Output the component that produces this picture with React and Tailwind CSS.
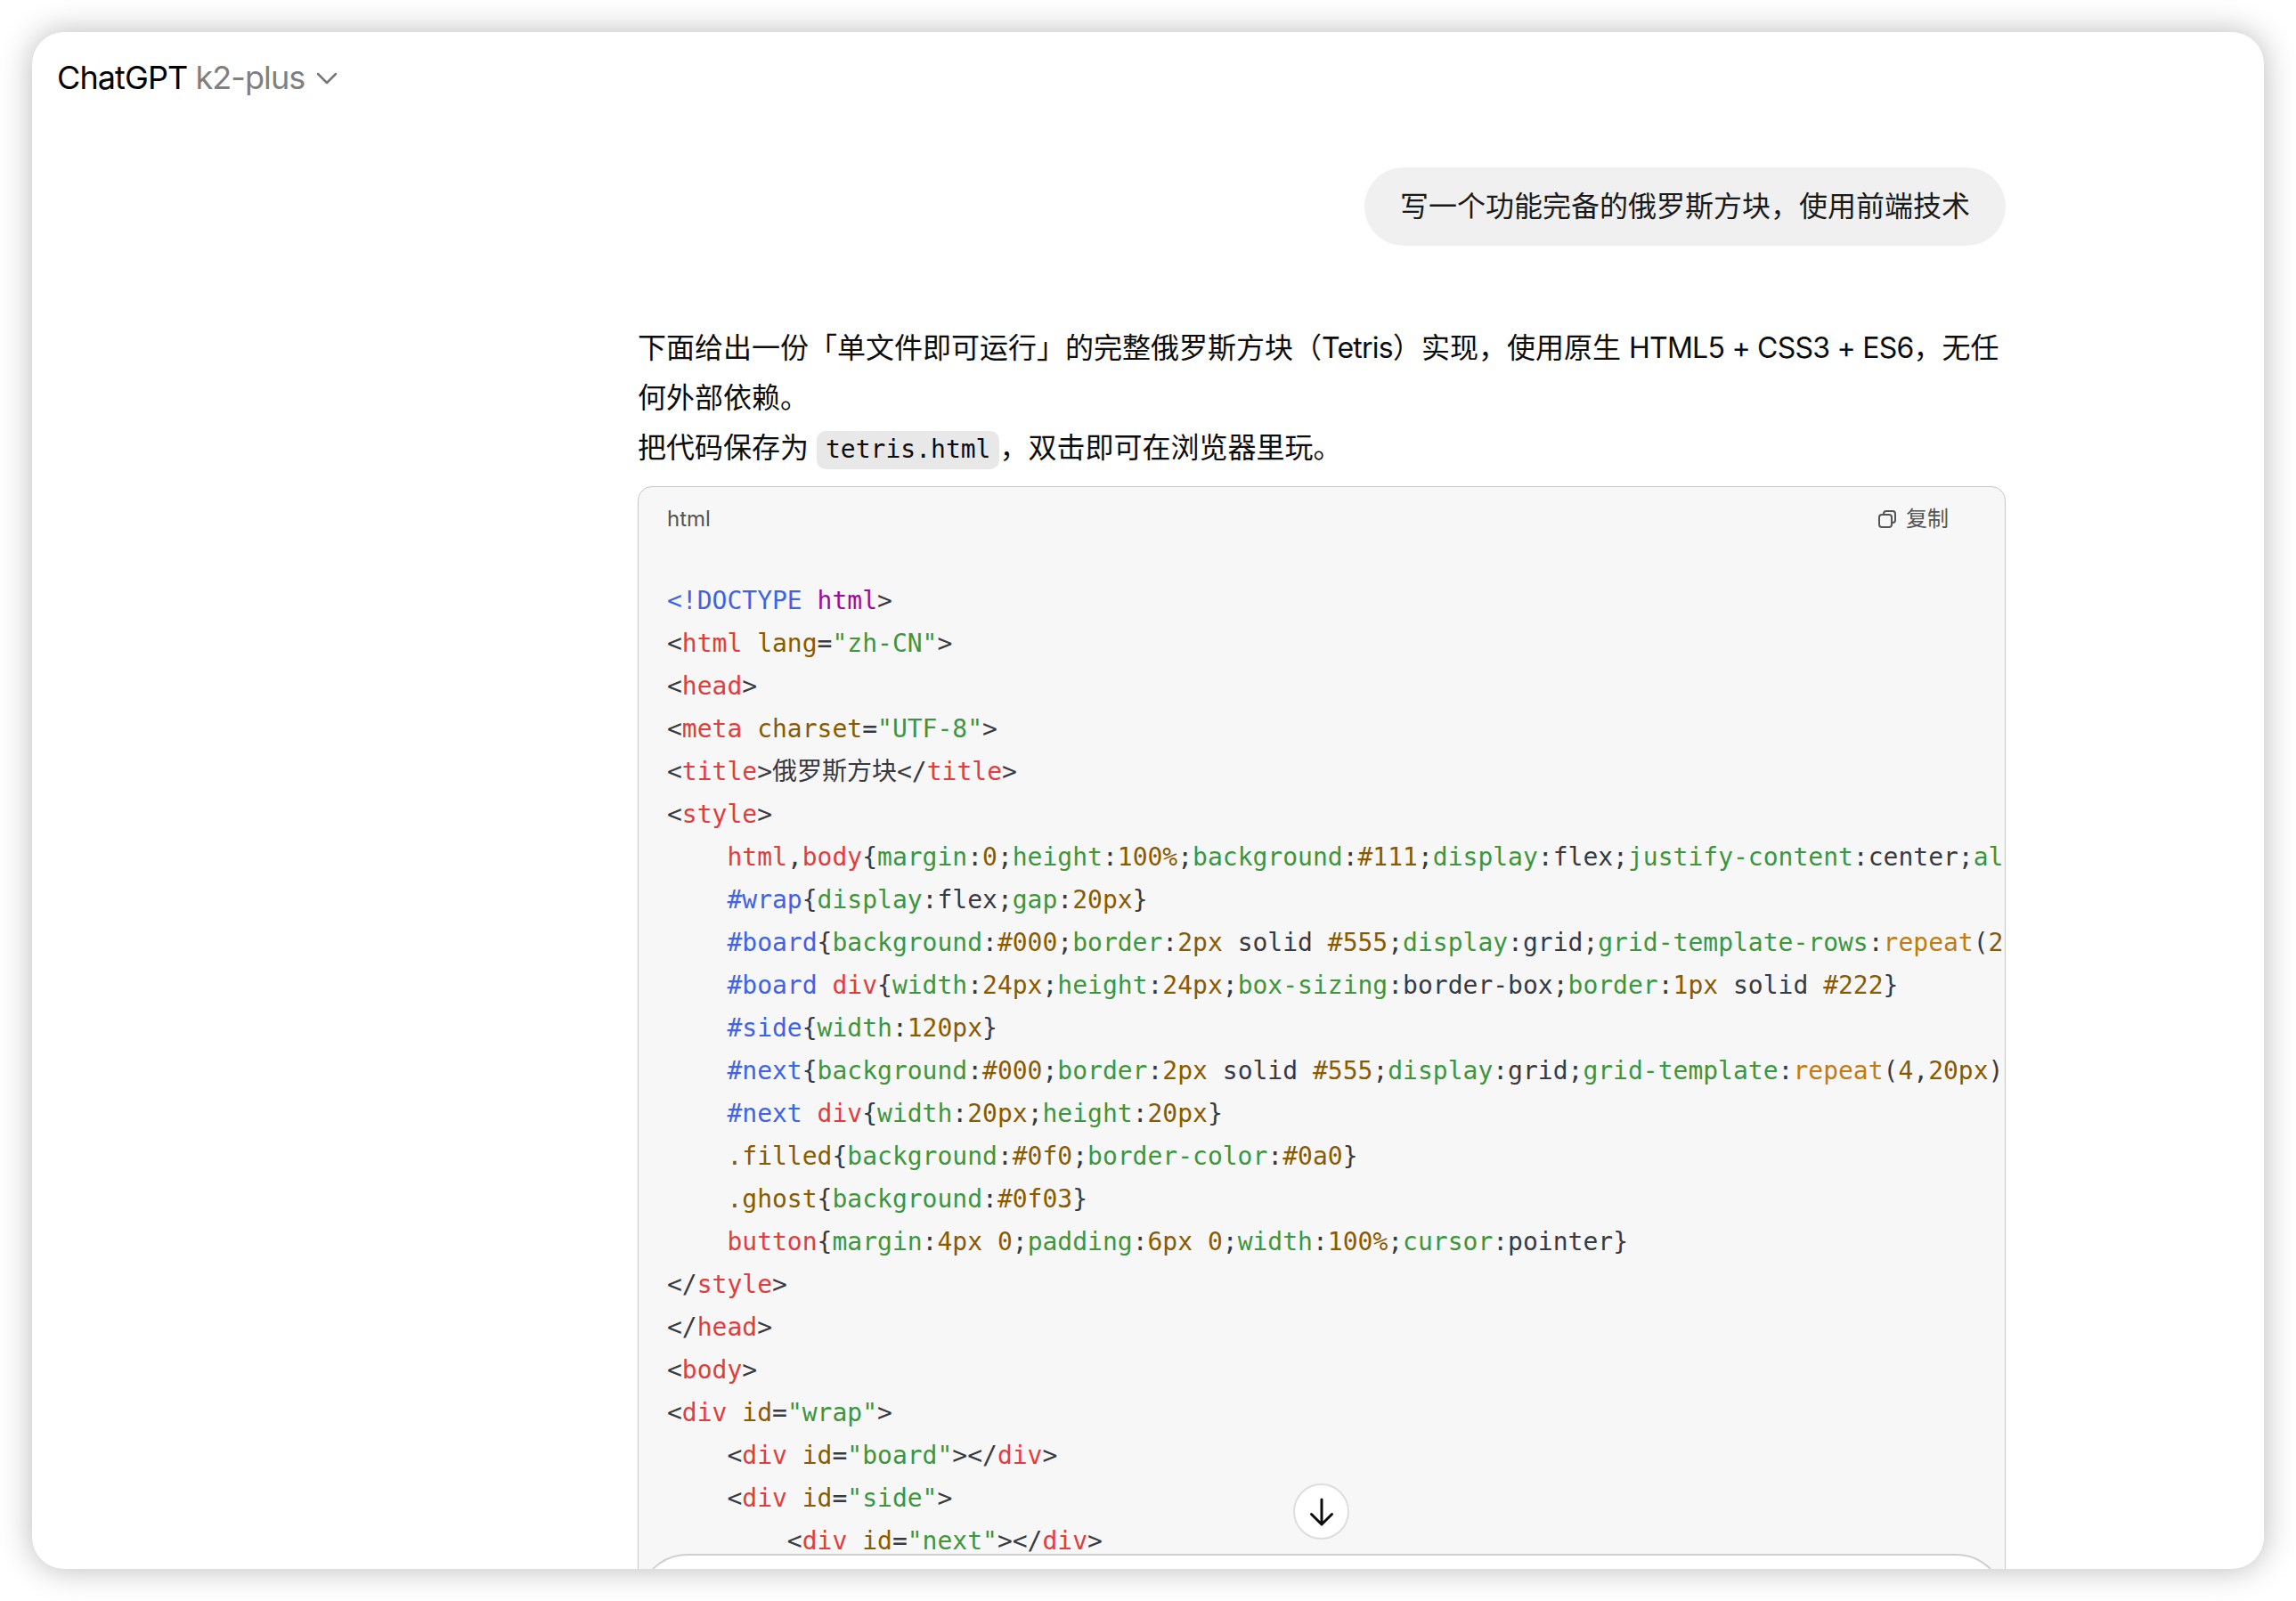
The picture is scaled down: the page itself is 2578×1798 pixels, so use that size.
import React from 'react';
import { ChevronDown } from 'lucide-react';

const sans = 'font-[Inter,"Noto_Sans_CJK_SC",sans-serif]';

// token colours, picked off the highlighted code
const T = {
  t: 'text-[#e03e3e]',   // tag / element selector
  a: 'text-[#8a5a00]',   // attribute / number / hex
  s: 'text-[#3d963d]',   // string / css property
  b: 'text-[#3f63e6]',   // doctype / id selector
  p: 'text-[#980f9e]',   // doctype name
  f: 'text-[#c07c10]',   // css function
  n: '',                 // plain
};

// Each line is [indent, 'k|text', 'k|text', ...]
const lines = [
  [0, 'b|<!DOCTYPE', 'n| ', 'p|html', 'n|>'],
  [0, 'n|<', 't|html', 'n| ', 'a|lang', 'n|=', 's|"zh-CN"', 'n|>'],
  [0, 'n|<', 't|head', 'n|>'],
  [0, 'n|<', 't|meta', 'n| ', 'a|charset', 'n|=', 's|"UTF-8"', 'n|>'],
  [0, 'n|<', 't|title', 'n|>俄罗斯方块</', 't|title', 'n|>'],
  [0, 'n|<', 't|style', 'n|>'],
  [4, 't|html', 'n|,', 't|body', 'n|{', 's|margin', 'n|:', 'a|0', 'n|;', 's|height', 'n|:', 'a|100%', 'n|;', 's|background', 'n|:', 'a|#111', 'n|;', 's|display', 'n|:flex;', 's|justify-content', 'n|:center;', 's|al'],
  [4, 'b|#wrap', 'n|{', 's|display', 'n|:flex;', 's|gap', 'n|:', 'a|20px', 'n|}'],
  [4, 'b|#board', 'n|{', 's|background', 'n|:', 'a|#000', 'n|;', 's|border', 'n|:', 'a|2px', 'n| solid ', 'a|#555', 'n|;', 's|display', 'n|:grid;', 's|grid-template-rows', 'n|:', 'f|repeat', 'n|(', 'a|2'],
  [4, 'b|#board', 'n| ', 't|div', 'n|{', 's|width', 'n|:', 'a|24px', 'n|;', 's|height', 'n|:', 'a|24px', 'n|;', 's|box-sizing', 'n|:border-box;', 's|border', 'n|:', 'a|1px', 'n| solid ', 'a|#222', 'n|}'],
  [4, 'b|#side', 'n|{', 's|width', 'n|:', 'a|120px', 'n|}'],
  [4, 'b|#next', 'n|{', 's|background', 'n|:', 'a|#000', 'n|;', 's|border', 'n|:', 'a|2px', 'n| solid ', 'a|#555', 'n|;', 's|display', 'n|:grid;', 's|grid-template', 'n|:', 'f|repeat', 'n|(', 'a|4', 'n|,', 'a|20px', 'n|)'],
  [4, 'b|#next', 'n| ', 't|div', 'n|{', 's|width', 'n|:', 'a|20px', 'n|;', 's|height', 'n|:', 'a|20px', 'n|}'],
  [4, 'a|.filled', 'n|{', 's|background', 'n|:', 'a|#0f0', 'n|;', 's|border-color', 'n|:', 'a|#0a0', 'n|}'],
  [4, 'a|.ghost', 'n|{', 's|background', 'n|:', 'a|#0f03', 'n|}'],
  [4, 't|button', 'n|{', 's|margin', 'n|:', 'a|4px', 'n| ', 'a|0', 'n|;', 's|padding', 'n|:', 'a|6px', 'n| ', 'a|0', 'n|;', 's|width', 'n|:', 'a|100%', 'n|;', 's|cursor', 'n|:pointer}'],
  [0, 'n|</', 't|style', 'n|>'],
  [0, 'n|</', 't|head', 'n|>'],
  [0, 'n|<', 't|body', 'n|>'],
  [0, 'n|<', 't|div', 'n| ', 'a|id', 'n|=', 's|"wrap"', 'n|>'],
  [4, 'n|<', 't|div', 'n| ', 'a|id', 'n|=', 's|"board"', 'n|></', 't|div', 'n|>'],
  [4, 'n|<', 't|div', 'n| ', 'a|id', 'n|=', 's|"side"', 'n|>'],
  [8, 'n|<', 't|div', 'n| ', 'a|id', 'n|=', 's|"next"', 'n|></', 't|div', 'n|>'],
];

function CodeLine({ line }) {
  const [indent, ...tokens] = line;
  return (
    <div className="h-[48px] leading-[48px] whitespace-pre">
      {' '.repeat(indent)}
      {tokens.map((tok, i) => {
        const at = tok.indexOf('|');
        return <span key={i} className={T[tok.slice(0, at)]}>{tok.slice(at + 1)}</span>;
      })}
    </div>
  );
}

function CopyIcon() {
  return (
    <svg width="22" height="22" viewBox="0 0 22 22" fill="none" stroke="#555" strokeWidth="2" strokeLinejoin="round">
      <rect x="2" y="6" width="14" height="14" rx="3" />
      <path d="M7 6V5a3 3 0 0 1 3-3h7a3 3 0 0 1 3 3v7a3 3 0 0 1-3 3h-1" />
    </svg>
  );
}

function Latin({ children }) {
  return <span className="tracking-[-0.75px]">{children}</span>;
}

export default function App() {
  return (
    <div className={`h-[1798px] bg-white p-[36px] ${sans}`}>
      <div className="relative h-[1726px] rounded-[36px] bg-white overflow-hidden shadow-[0_0_36px_rgba(0,0,0,0.28)]">
        {/* top bar */}
        <div className="flex items-center h-[102px] pl-[28px] text-[36px] tracking-[-0.9px]">
          <span className="text-black">ChatGPT</span>
          <span className="ml-[9px] text-[#808080]">k2-plus</span>
          <ChevronDown className="ml-[5px] mt-[1px] w-[40px] h-[40px] text-[#777]" strokeWidth={1.5} />
        </div>

        <div className="w-[1536px] ml-[680px]">
          {/* user message */}
          <div className="flex justify-end mt-[50px]">
            <div className="h-[88px] rounded-[44px] bg-[#f0f0f0] px-[40px] flex items-center text-[32px] text-[#1a1a1a]">
              写一个功能完备的俄罗斯方块，使用前端技术
            </div>
          </div>

          {/* assistant answer */}
          <div className="mt-[87px] text-[32px] leading-[56px] text-[#0d0d0d]">
            <p>
              下面给出一份「单文件即可运行」的完整俄罗斯方块（<Latin>Tetris</Latin>）实现，使用原生 <Latin>HTML5 + CSS3 + ES6</Latin>，无任何外部依赖。
            </p>
            <p>
              把代码保存为{' '}
              <code className="inline-block h-[43px] leading-[41px] align-[0px] rounded-[10px] bg-[#e8e8e8] px-[10px] text-[28px] font-['DejaVu_Sans_Mono',monospace]">tetris.html</code>
              ，双击即可在浏览器里玩。
            </p>
          </div>

          {/* code block */}
          <div className="mt-[15px] h-[1300px] rounded-[16px] border border-[#c8c8c8] bg-[#f7f7f7] overflow-hidden">
            <div className="flex items-center justify-between h-[72px] pl-[32px] pr-[63px] text-[24px] text-[#555]">
              <span>html</span>
              <span className="flex items-center gap-[10px]"><CopyIcon />复制</span>
            </div>
            <div className="mt-[32px] pl-[32px] text-[28px] text-[#383a42] font-['DejaVu_Sans_Mono','Noto_Sans_CJK_SC',monospace]">
              {lines.map((line, i) => <CodeLine key={i} line={line} />)}
            </div>
          </div>
        </div>

        {/* scroll-to-bottom button */}
        <button className="absolute left-[1416px] top-[1630px] w-[63px] h-[63px] rounded-full bg-white border-2 border-[#dedede] flex items-center justify-center">
          <svg width="32" height="32" viewBox="0 0 32 32" fill="none" stroke="#0d0d0d" strokeWidth="3" strokeLinecap="round" strokeLinejoin="round">
            <path d="M16 2V30M4.5 18.5L16 30L27.5 18.5" />
          </svg>
        </button>

        {/* composer, mostly cut off by the window */}
        <div className="absolute left-[680px] top-[1709px] w-[1536px] h-[120px] rounded-[56px] bg-white border-2 border-[#cfcfcf]" />
      </div>
    </div>
  );
}
